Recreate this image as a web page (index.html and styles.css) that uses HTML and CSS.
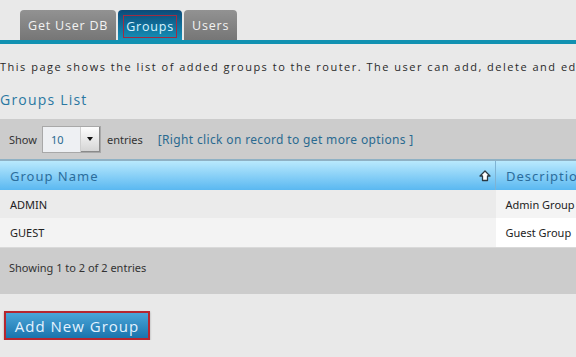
FILE: index.html
```html
<!DOCTYPE html>
<html lang="en">
<head>
  <meta charset="UTF-8">
  <meta name="viewport" content="width=device-width, initial-scale=1.0">
  <title>Groups</title>
  <link rel="stylesheet" href="styles.css">
</head>
<body>
  <!-- Tabs -->
  <div class="tabs">
      <div class="tab">Get User DB</div>
      <div class="tab active"><span class="focus">Groups</span></div>
      <div class="tab">Users</div>
  </div>

  <p class="intro">This page shows the list of added groups to the router. The user can add, delete and edit groups.</p>
  <h3 class="title">Groups List</h3>

  <!-- Table toolbar -->
  <div class="toolbar">
      <span>Show</span>
      <div class="select">
          <span class="select-value">10</span>
          <span class="select-btn"><span class="caret"></span></span>
      </div>
      <span>entries</span>
      <span class="hint">[Right click on record to get more options ]</span>
  </div>

  <table class="grid">
      <thead>
          <tr>
              <th class="col-name">Group Name
                  <svg class="sort" width="12" height="12" viewBox="0 0 12 12">
                      <path d="M6 1 L11 6 L8.5 6 L8.5 10.5 L3.5 10.5 L3.5 6 L1 6 Z" fill="#fff" stroke="#2b3a44" stroke-width="1.3" stroke-linejoin="round"/>
                  </svg>
              </th>
              <th>Description</th>
          </tr>
      </thead>
      <tbody>
          <tr class="odd">
              <td>ADMIN</td>
              <td class="desc">Admin Group</td>
          </tr>
          <tr class="even">
              <td>GUEST</td>
              <td class="desc">Guest Group</td>
          </tr>
      </tbody>
  </table>

  <div class="footer">Showing 1 to 2 of 2 entries</div>

  <button class="add-btn">Add New Group</button>
</body>
</html>
```

FILE: styles.css
```css
body {
    margin: 0;
    background: #e9e9e9;
    font-family: "Open Sans", "DejaVu Sans", sans-serif;
    color: #333;
    overflow: hidden;
    width: 576px;
}
.tabs {
    display: flex;
    gap: 2px;
    padding: 10px 0 0 20px;
    border-bottom: 4px solid #1191b1;
}
.tab {
    height: 30px;
    box-sizing: border-box;
    padding: 0 8px;
    display: flex;
    align-items: center;
    background: linear-gradient(#929292, #767676);
    color: #f2f2f2;
    font-size: 12.5px;
    letter-spacing: 0.8px;
    border-radius: 4px 4px 0 0;
}
.tab.active {
    padding: 3px 5px 0;
    background: linear-gradient(#0c4a78, #1591b9);
    color: #d9f2ff;
}
.focus {
    display: inline-block;
    border: 1px solid #a02c42;
    padding: 0 2px;
    line-height: 21px;
}
.intro {
    margin: 0;
    padding-top: 14px;
    line-height: 18px;
    font-size: 11px;
    letter-spacing: 1.5px;
    white-space: nowrap;
    color: #2a2a2a;
}
.title {
    margin: 14px 0 0;
    line-height: 20px;
    font-size: 14px;
    font-weight: normal;
    letter-spacing: 1.2px;
    color: #2a78a2;
}
.toolbar {
    margin-top: 9px;
    height: 40px;
    background: #cccccc;
    display: flex;
    align-items: center;
    padding-left: 9px;
    font-family: "Noto Sans", sans-serif;
    font-size: 11px;
    color: #333;
}
.select {
    display: flex;
    width: 59px;
    height: 27px;
    box-sizing: border-box;
    margin: 0 6px 0 5px;
    border: 1px solid #a8a8a8;
    background: #eef0f3;
}
.select-value {
    flex: 1;
    padding-left: 8px;
    line-height: 25px;
    color: #2a6a90;
}
.select-btn {
    width: 19px;
    display: flex;
    align-items: center;
    justify-content: center;
    background: linear-gradient(#fdfdfd, #d4d4d4);
    border-left: 1px solid #cfcfcf;
    box-shadow: inset -1px -1px 0 #8a8a8a;
}
.caret {
    width: 0;
    height: 0;
    border-left: 3px solid transparent;
    border-right: 3px solid transparent;
    border-top: 4px solid #111;
}
.hint {
    margin-left: 15px;
    font-size: 12px;
    letter-spacing: 0.35px;
    color: #2a6a90;
}
.grid {
    width: 700px;
    border-collapse: collapse;
    border-top: 2px solid #8fb1c4;
    font-family: "Noto Sans", sans-serif;
    font-size: 11px;
}
.grid th {
    height: 29px;
    padding: 0 10px;
    text-align: left;
    font-weight: normal;
    font-size: 13px;
    letter-spacing: 1px;
    color: #2b6d9c;
    background: linear-gradient(#b9e9fd, #5ab8f1);
    border-left: 1px solid #7fb3d3;
}
.grid th.col-name {
    width: 475px;
    position: relative;
    border-left: none;
}
.sort {
    position: absolute;
    right: 4px;
    top: 9px;
}
.grid td {
    height: 28px;
    padding: 0 10px;
    color: #222;
}
.grid .odd td {
    background: #ebebeb;
}
.grid .even td {
    background: #f3f3f3;
    height: 29px;
}
.grid .odd td.desc {
    background: #f4f4f4;
}
.grid .even td.desc {
    background: #ffffff;
}
.footer {
    height: 47px;
    box-sizing: border-box;
    padding: 12px 9px 0;
    background: #cccccc;
    border-top: 1px solid #d9d9d9;
    font-family: "Noto Sans", sans-serif;
    font-size: 11px;
    color: #333;
}
.add-btn {
    display: block;
    margin: 17px 0 0 4px;
    width: 146px;
    height: 29px;
    border: 2px solid #b6262f;
    background: linear-gradient(#4aa5d8, #1a74ad);
    color: #e4f3ff;
    font-family: "Open Sans", sans-serif;
    font-size: 15px;
    letter-spacing: 1px;
    box-shadow: 0 1px 2px rgba(0, 0, 0, 0.3);
    cursor: pointer;
}
```
